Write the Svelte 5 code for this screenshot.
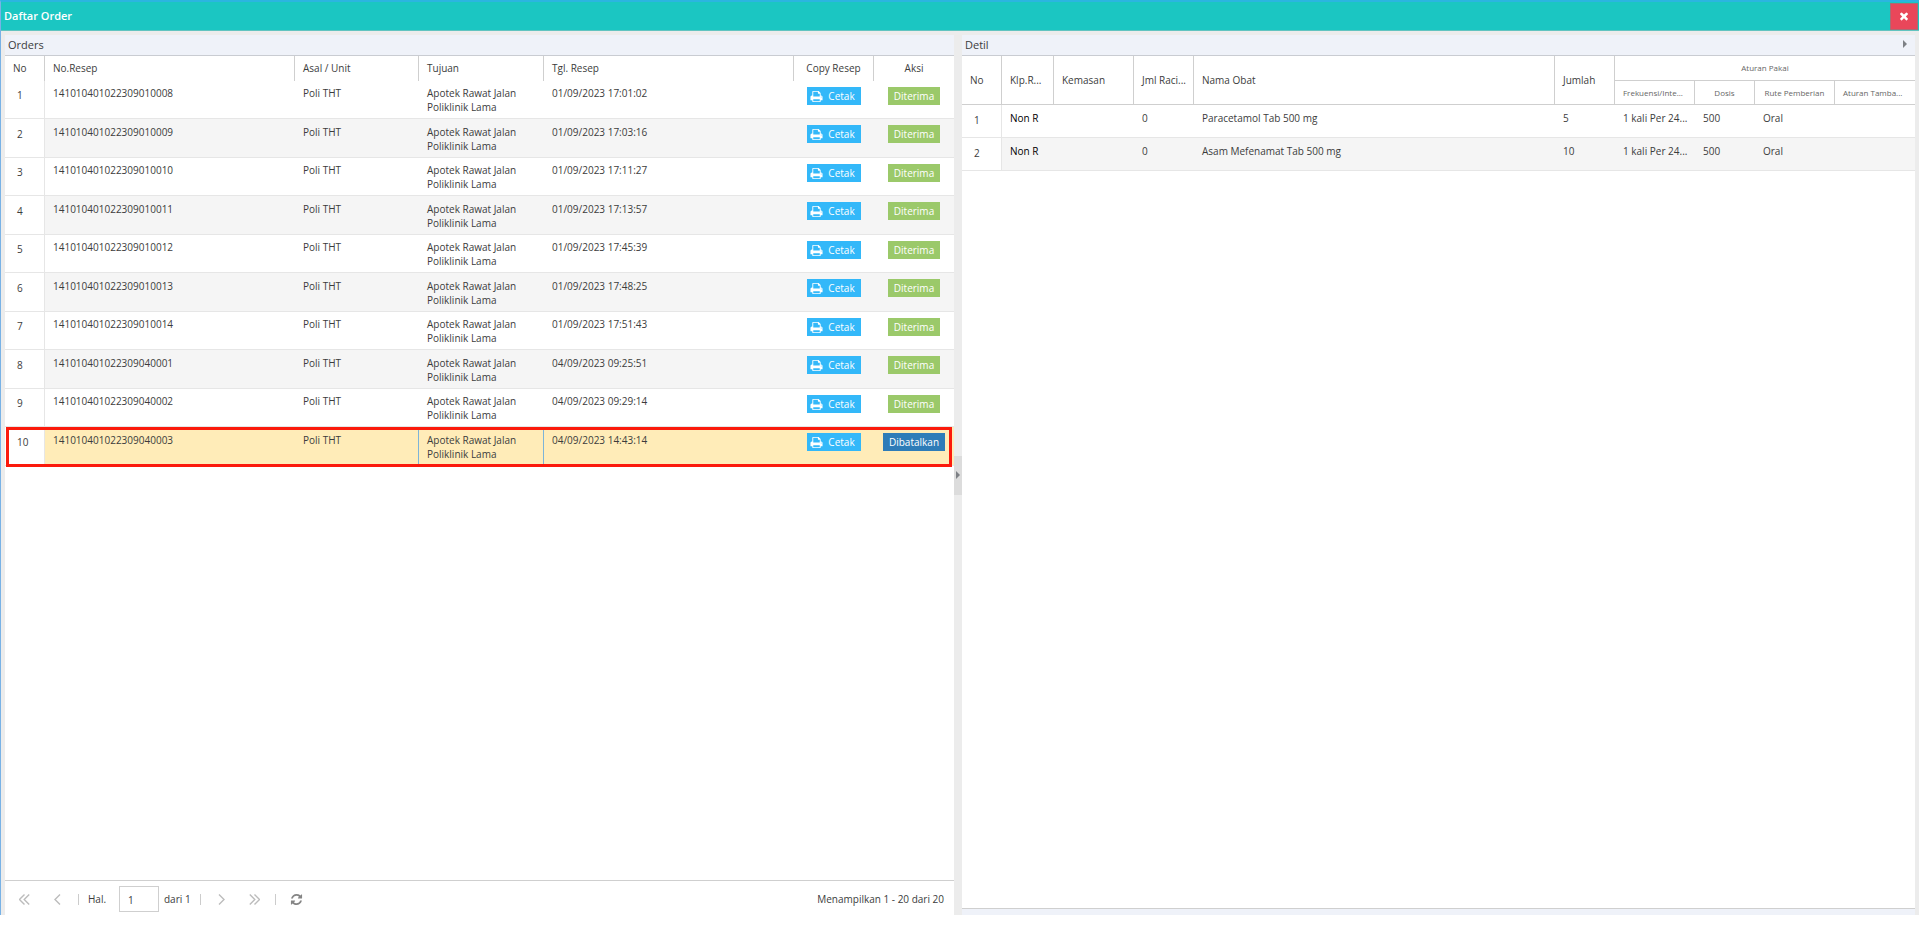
<script lang="ts">
	interface Order {
		resep: string;
		tanggal: string;
		status: 'Diterima' | 'Dibatalkan';
	}

	const orders: Order[] = [
		{ resep: '141010401022309010008', tanggal: '01/09/2023 17:01:02', status: 'Diterima' },
		{ resep: '141010401022309010009', tanggal: '01/09/2023 17:03:16', status: 'Diterima' },
		{ resep: '141010401022309010010', tanggal: '01/09/2023 17:11:27', status: 'Diterima' },
		{ resep: '141010401022309010011', tanggal: '01/09/2023 17:13:57', status: 'Diterima' },
		{ resep: '141010401022309010012', tanggal: '01/09/2023 17:45:39', status: 'Diterima' },
		{ resep: '141010401022309010013', tanggal: '01/09/2023 17:48:25', status: 'Diterima' },
		{ resep: '141010401022309010014', tanggal: '01/09/2023 17:51:43', status: 'Diterima' },
		{ resep: '141010401022309040001', tanggal: '04/09/2023 09:25:51', status: 'Diterima' },
		{ resep: '141010401022309040002', tanggal: '04/09/2023 09:29:14', status: 'Diterima' },
		{ resep: '141010401022309040003', tanggal: '04/09/2023 14:43:14', status: 'Dibatalkan' }
	];

	const details = [
		{ nama: 'Paracetamol Tab 500 mg', jumlah: 5 },
		{ nama: 'Asam Mefenamat Tab 500 mg', jumlah: 10 }
	];

	let selected = $state(9);
	let page = $state('1');
</script>

<div class="window">
	<header class="titlebar">
		<h1>Daftar Order</h1>
		<button class="close" aria-label="Tutup">
			<svg width="12" height="12" viewBox="0 0 1792 1792"><path fill="currentColor" d="M1490 1322q0 40-28 68l-136 136q-28 28-68 28t-68-28l-294-294-294 294q-28 28-68 28t-68-28l-136-136q-28-28-28-68t28-68l294-294-294-294q-28-28-28-68t28-68l136-136q28-28 68-28t68 28l294 294 294-294q28-28 68-28t68 28l136 136q28 28 28 68t-28 68l-294 294 294 294q28 28 28 68z" /></svg>
		</button>
	</header>

	<div class="content">
		<section class="panel orders">
			<h2>Orders</h2>
			<div class="grid">
				<table>
					<colgroup>
						<col class="w40" /><col /><col class="w124" /><col class="w125" /><col /><col class="w80" /><col class="w80" />
					</colgroup>
					<thead>
						<tr>
							<th>No</th>
							<th>No.Resep</th>
							<th>Asal / Unit</th>
							<th>Tujuan</th>
							<th>Tgl. Resep</th>
							<th class="center">Copy Resep</th>
							<th class="center">Aksi</th>
						</tr>
					</thead>
					<tbody>
						{#each orders as order, i}
							<tr class:selected={i === selected} onclick={() => (selected = i)}>
								<td class="num">{i + 1}</td>
								<td>{order.resep}</td>
								<td class="asal">Poli THT</td>
								<td class="tujuan">Apotek Rawat Jalan<br />Poliklinik Lama</td>
								<td>{order.tanggal}</td>
								<td class="action">
									<button class="btn print">
										<svg width="13" height="13" viewBox="0 0 1792 1792"><path fill="currentColor" d="M448 1536h896v-256h-896v256zm0-640h896v-384h-160q-40 0-68-28t-28-68v-160h-640v640zm1152 64q0-26-19-45t-45-19-45 19-19 45 19 45 45 19 45-19 19-45zm128 0v416q0 13-9.500 22.500t-22.500 9.500h-224v160q0 40-28 68t-68 28h-960q-40 0-68-28t-28-68v-160h-224q-13 0-22.500-9.500t-9.500-22.500v-416q0-79 56.500-135.500t135.500-56.500h64v-544q0-40 28-68t68-28h672q40 0 88 20t76 48l152 152q28 28 48 76t20 88v256h64q79 0 135.500 56.500t56.500 135.500z" /></svg>
										Cetak
									</button>
								</td>
								<td class="action">
									<button class="btn" class:cancelled={order.status === 'Dibatalkan'}>{order.status}</button>
								</td>
							</tr>
						{/each}
					</tbody>
				</table>
			</div>
			<footer class="pager">
				<button aria-label="Halaman pertama">
					<svg width="11" height="11" viewBox="0 0 11 11"><path d="M5.500 .5l-5 5 5 5M10.200 .5l-5 5 5 5" /></svg>
				</button>
				<button aria-label="Halaman sebelumnya">
					<svg width="11" height="11" viewBox="0 0 11 11"><path d="M8 .5l-5 5 5 5" /></svg>
				</button>
				<span class="sep"></span>
				<label for="page">Hal.</label>
				<input id="page" type="text" bind:value={page} />
				<span class="total">dari 1</span>
				<span class="sep"></span>
				<button aria-label="Halaman berikutnya">
					<svg width="11" height="11" viewBox="0 0 11 11"><path d="M3 .5l5 5-5 5" /></svg>
				</button>
				<button aria-label="Halaman terakhir">
					<svg width="11" height="11" viewBox="0 0 11 11"><path d="M.8 .5l5 5-5 5M5.500 .5l5 5-5 5" /></svg>
				</button>
				<span class="sep"></span>
				<button class="refresh" aria-label="Muat ulang">
					<svg width="13" height="13" viewBox="0 0 1792 1792"><path d="M1639 1056q0 5-1 7-64 268-268 434.500t-478 166.500q-146 0-282.500-55t-243.500-157l-129 129q-19 19-45 19t-45-19-19-45v-448q0-26 19-45t45-19h448q26 0 45 19t19 45-19 45l-137 137q71 66 161 102t187 36q134 0 250-65t186-179q11-17 53-117 8-23 30-23h192q13 0 22.500 9.500t9.500 22.500zm25-800v448q0 26-19 45t-45 19h-448q-26 0-45-19t-19-45 19-45l138-138q-148-137-349-137-134 0-250 65t-186 179q-11 17-53 117-8 23-30 23h-199q-13 0-22.500-9.500t-9.500-22.500v-7q65-268 270-434.500t480-166.500q146 0 284 55.500t245 156.500l130-129q19-19 45-19t45 19 19 45z" /></svg>
				</button>
				<span class="info">Menampilkan 1 - 20 dari 20</span>
			</footer>
		</section>

		<div class="splitter">
			<button aria-label="Ciutkan panel"><span class="arrow"></span></button>
		</div>

		<section class="panel detail">
			<h2>Detil <button class="collapse" aria-label="Ciutkan"><span class="arrow"></span></button></h2>
			<div class="grid">
				<table>
					<colgroup>
						<col class="w40" /><col class="w52" /><col class="w80" /><col class="w60" /><col /><col class="w60" /><col class="w80" /><col class="w60" /><col class="w80" /><col class="w80" />
					</colgroup>
					<thead>
						<tr>
							<th rowspan="2">No</th>
							<th rowspan="2">Klp.R...</th>
							<th rowspan="2">Kemasan</th>
							<th rowspan="2">Jml Raci...</th>
							<th rowspan="2">Nama Obat</th>
							<th rowspan="2">Jumlah</th>
							<th colspan="4" class="sub center">Aturan Pakai</th>
						</tr>
						<tr>
							<th class="sub">Frekuensi/Inte...</th>
							<th class="sub center">Dosis</th>
							<th class="sub center">Rute Pemberian</th>
							<th class="sub">Aturan Tamba...</th>
						</tr>
					</thead>
					<tbody>
						{#each details as item, i}
							<tr>
								<td class="num">{i + 1}</td>
								<td class="group">Non R</td>
								<td></td>
								<td>0</td>
								<td>{item.nama}</td>
								<td>{item.jumlah}</td>
								<td>1 kali Per 24...</td>
								<td>500</td>
								<td>Oral</td>
								<td></td>
							</tr>
						{/each}
					</tbody>
				</table>
			</div>
			<div class="bottom"></div>
		</section>
	</div>
</div>

<style>
	:global(body) {
		margin: 0;
		background: #fff;
	}

	.window {
		box-sizing: border-box;
		display: flex;
		flex-direction: column;
		min-height: calc(100vh - 19px);
		margin-right: 11px;
		border-top: 2px solid #2bb5e0;
		border-left: 1px solid #78b2e6;
		background: #ececec;
		color: #3c3c3c;
		font-family: 'Open Sans', 'Noto Sans', sans-serif;
		font-size: 10px;
	}

	button,
	input {
		font: inherit;
	}

	button {
		display: flex;
		align-items: center;
		justify-content: center;
		padding: 0;
		border: 0;
		background: none;
		cursor: pointer;
	}

	.titlebar {
		box-sizing: border-box;
		display: flex;
		align-items: center;
		justify-content: space-between;
		height: 29px;
		padding: 0 1px 0 3px;
		border-bottom: 1px solid #62c4c0;
		background: #1bc6c2;
	}

	h1 {
		margin: 0;
		color: #fff;
		font-size: 11px;
		font-weight: 600;
		line-height: 16px;
	}

	.close {
		box-sizing: border-box;
		width: 28px;
		height: 27px;
		border: 1px solid #a96b74;
		background: #e9475a;
		color: #fff;
	}

	.content {
		flex: 1;
		display: flex;
		padding: 4px 4px 0;
	}

	.panel {
		display: flex;
		flex-direction: column;
		min-width: 0;
		background: #fff;
	}

	.orders {
		flex: 949 1 0;
	}

	.detail {
		flex: 953 1 0;
	}

	h2 {
		box-sizing: border-box;
		display: flex;
		align-items: center;
		justify-content: space-between;
		height: 21px;
		margin: 0;
		padding: 0 8px 2px 3px;
		border-bottom: 1px solid #c9ccd2;
		background: #eff2f9;
		font-size: 11px;
		font-weight: 400;
	}

	.grid {
		flex: 1;
	}

	table {
		width: 100%;
		border-spacing: 0;
		table-layout: fixed;
	}

	.w40 { width: 40px; }
	.w52 { width: 52px; }
	.w60 { width: 60px; }
	.w80 { width: 80px; }
	.w124 { width: 124px; }
	.w125 { width: 125px; }

	th,
	td {
		box-sizing: border-box;
		padding: 0 8px;
		text-align: left;
		white-space: nowrap;
	}

	th {
		height: 24px;
		border-right: 1px solid #cfcfcf;
		font-weight: 400;
		line-height: 14px;
	}

	th:last-child {
		border-right: 0;
	}

	.center {
		padding: 0;
		text-align: center;
	}

	.orders th {
		height: 25px;
		padding-bottom: 2px;
	}

	td {
		height: 39px;
		padding-top: 6px;
		border-bottom: 1px solid #e6e6e6;
		line-height: 14px;
		vertical-align: top;
	}

	tbody tr:nth-child(even) td {
		background: #f5f5f5;
	}

	tbody tr td.num,
	tbody tr:nth-child(even) td.num {
		padding-top: 8px;
		padding-left: 12px;
		border-right: 1px solid #e6e6e6;
		background: #fff;
	}

	.orders tbody tr:nth-child(odd) td {
		height: 38px;
		padding-top: 5px;
	}

	.orders tbody tr:nth-child(odd) td.num {
		padding-top: 7px;
	}

	.orders tbody tr td.action,
	.orders tbody tr:nth-child(odd) td.action {
		padding: 6px 0 0;
	}

	.orders tbody tr.selected {
		position: relative;
	}

	.orders tbody tr.selected td:not(.num) {
		background: #ffecb8;
	}

	.selected .asal,
	.selected .tujuan {
		border-right: 1px solid #7db4d8;
	}

	/* marker frame drawn round the whole selected row */
	.selected .num::after {
		content: '';
		position: absolute;
		inset: 0 2px -1px 1px;
		border: 3px solid #fb1a0c;
		pointer-events: none;
	}

	.btn {
		height: 18px;
		margin: 0 auto;
		padding: 0 6px;
		background: #9bc96a;
		color: #fff;
		line-height: 18px;
	}

	.btn.print {
		gap: 5px;
		padding: 0 6px 0 3px;
		background: #33b8f9;
	}

	.btn.cancelled {
		background: #2e7cb8;
	}

	.pager {
		box-sizing: border-box;
		display: flex;
		align-items: center;
		height: 35px;
		padding: 2px 10px 0 8px;
		border-top: 1px solid #cfcfcf;
	}

	.pager button {
		width: 23px;
		height: 23px;
		margin-right: 10px;
	}

	.pager svg {
		fill: none;
		stroke: #bcbcbc;
		stroke-width: 1.4;
	}

	.pager .refresh svg {
		fill: #858585;
		stroke: none;
	}

	.sep {
		width: 1px;
		height: 11px;
		margin: 0 9px 0 -1px;
		background: #ccc;
	}

	.pager label {
		width: 31px;
	}

	.pager input {
		box-sizing: border-box;
		width: 40px;
		height: 26px;
		padding: 2px 8px 0;
		border: 1px solid #cfcfcf;
		border-radius: 0;
		color: inherit;
	}

	.total {
		width: 32px;
		margin: 0 5px;
	}

	.info {
		margin-left: auto;
	}

	.splitter {
		display: flex;
		align-items: center;
		width: 8px;
	}

	.splitter button {
		width: 8px;
		height: 39px;
		background: #dcdcdc;
	}

	.arrow {
		border: 4px solid transparent;
		border-right: 0;
		border-left-color: #7d8085;
	}

	.detail th[rowspan] {
		border-bottom: 1px solid #cfcfcf;
	}

	.detail .sub {
		border-bottom: 1px solid #cfcfcf;
		color: #666;
		font-size: 8px;
	}

	.detail thead tr:first-child .sub {
		height: 25px;
	}

	.detail td {
		height: 33px;
		padding-top: 6px;
	}

	.detail tbody tr td.num {
		padding-top: 8px;
	}

	.detail .group {
		color: #000;
	}

	.bottom {
		height: 6px;
		border-top: 1px solid #cfcfcf;
		background: #eff2f9;
	}
</style>
